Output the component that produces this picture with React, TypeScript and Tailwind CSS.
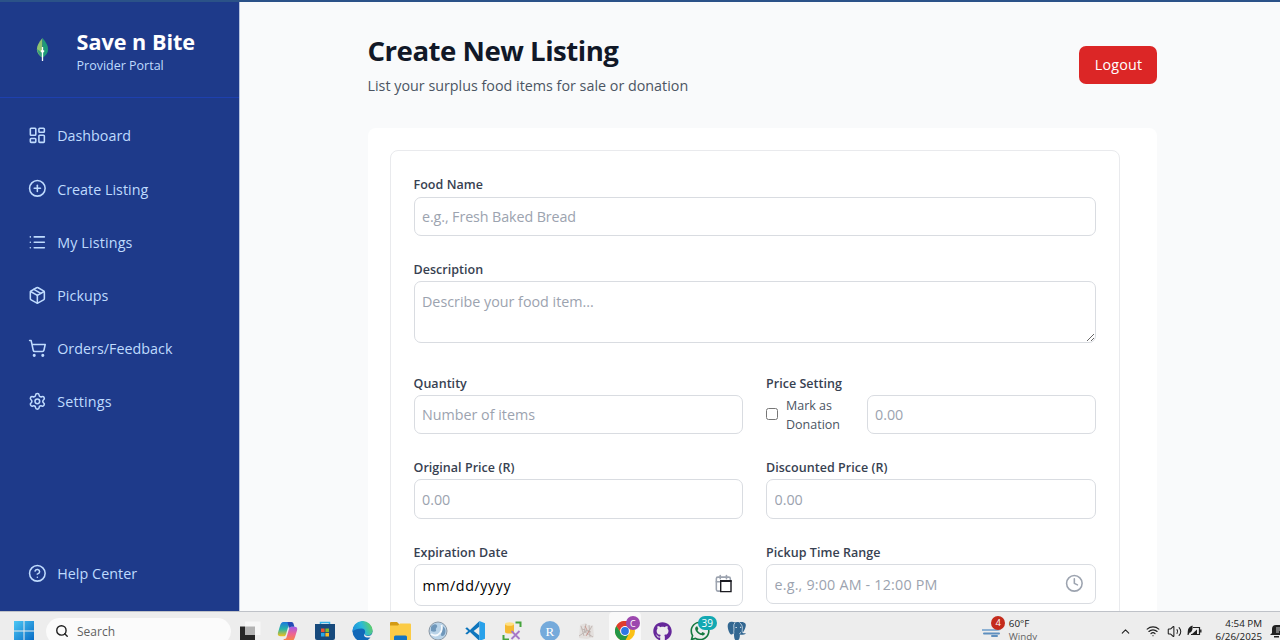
import type { ReactNode } from 'react';
import {
  LayoutDashboard,
  CirclePlus,
  List,
  Package,
  ShoppingCart,
  Settings,
  CircleQuestionMark,
  Calendar,
  Clock,
  Search,
  ChevronUp,
  Wifi,
  Volume2,
} from 'lucide-react';
import { FaGithub, FaWhatsapp } from 'react-icons/fa6';

const navItems = [
  { label: 'Dashboard', icon: LayoutDashboard, tracking: 'tracking-[0px]' },
  { label: 'Create Listing', icon: CirclePlus, tracking: 'tracking-[0.02px]' },
  { label: 'My Listings', icon: List, tracking: 'tracking-[0.15px]' },
  { label: 'Pickups', icon: Package, tracking: 'tracking-[0.05px]' },
  { label: 'Orders/Feedback', icon: ShoppingCart, tracking: 'tracking-[0.03px]' },
  { label: 'Settings', icon: Settings, tracking: 'tracking-[0.2px]' },
];

function Leaf() {
  return (
    <svg width="13" height="24" viewBox="0 0 12 24">
      <path d="M6 0C2 4.500 .4 8 .4 11.500c0 3.300 2 6 5.600 8.300z" fill="#8fc36f" />
      <path d="M6 0c4 4.500 5.600 8 5.600 11.500 0 3.300-2 6-5.600 8.300z" fill="#1f9a78" />
      <path d="M.5 11c.6 3.700 2.400 6.400 5.500 8.800V15z" fill="#37a07c" />
      <path d="M6 9v14M6 14.500L4.500 12.500M6 14.500L7.500 12.500" stroke="#fff" strokeWidth="1.300" fill="none" />
    </svg>
  );
}

function Sidebar() {
  return (
    <aside className="flex w-[240px] shrink-0 flex-col border-r border-[#b8c4de] bg-[#1e3a8a] text-[#bfdbfe]">
      <div className="flex h-[96px] items-center border-b border-[#1e40af] pl-9">
        <Leaf />
        <div className="ml-[27.500px] flex flex-col pt-[2px]">
          <span className="h-[25px] text-[21.600px] font-bold leading-[31px] text-white">Save n Bite</span>
          <span className="mt-[4px] h-[21px] text-[12.500px] leading-[21px]">Provider Portal</span>
        </div>
      </div>
      <nav className="mt-[11px] flex flex-col">
        {navItems.map(({ label, icon: Icon, tracking }) => (
          <a key={label} className="flex h-[53.200px] items-center gap-[11px] pl-[27.500px]">
            <Icon size={18.700} strokeWidth={2} />
            <span className={`pt-px text-[14.300px] ${tracking}`}>{label}</span>
          </a>
        ))}
      </nav>
      <a className="mt-auto mb-[11px] flex h-[53px] items-center gap-[11px] pl-[27.500px]">
        <CircleQuestionMark size={18.700} />
        <span className="text-[14.300px] tracking-[0.05px]">Help Center</span>
      </a>
    </aside>
  );
}

function Label({ children, gap = 'mb-[3px]' }: { children: ReactNode; gap?: string }) {
  return (
    <label
      className={`block h-[19px] text-[12.500px] font-semibold leading-[21px] tracking-[0.04px] text-[#374151] ${gap}`}
    >
      {children}
    </label>
  );
}

const field =
  'block w-full rounded-[7px] border border-[#d9dce1] bg-white px-[7.500px] text-[14.300px] text-black outline-none placeholder:text-[#9ca3af]';

function ListingForm() {
  return (
    <form className="h-[600px] w-[730px] rounded-[8px] border border-[#e9eaed] px-[23px] pt-[23px]">
      <Label gap="mb-[4px]">Food Name</Label>
      <input className={`${field} h-[39px] tracking-[-0.1px]`} placeholder="e.g., Fresh Baked Bread" />
      <Label gap="mt-[23px] mb-[3px]">Description</Label>
      <textarea className={`${field} h-[62px] resize-y pt-[8.500px]`} placeholder="Describe your food item..." />
      <div className="mt-[30px] grid grid-cols-2 gap-x-[23px] gap-y-[23px]">
        <div>
          <Label>Quantity</Label>
          <input className={`${field} h-[39px]`} placeholder="Number of items" />
        </div>
        <div>
          <Label>Price Setting</Label>
          <div className="flex h-[39px] items-center">
            <span className="mb-px size-[12px] shrink-0 rounded-[2.500px] border border-[#767676] bg-white" />
            <span className="ml-2 w-[80.500px] shrink-0 pt-[2px] text-[12.500px] leading-[18.700px] text-[#4b5563]">
              Mark as
              <br />
              Donation
            </span>
            <input className={`${field} h-[39px]`} placeholder="0.00" />
          </div>
        </div>
        <div>
          <Label>Original Price (R)</Label>
          <input className={`${field} h-[40px]`} placeholder="0.00" />
        </div>
        <div>
          <Label>Discounted Price (R)</Label>
          <input className={`${field} h-[40px]`} placeholder="0.00" />
        </div>
        <div>
          <Label>Expiration Date</Label>
          <div className={`${field} flex h-[42px] items-center justify-between`}>
            <span className="pl-[0.500px] pt-[2px] tracking-[0.55px]">mm/dd/yyyy</span>
            <span className="relative mr-[2px] mb-[3px] size-[19px] text-[#9ca3af]">
              <Calendar size={18.700} />
              <svg className="absolute left-[5px] top-[4.500px]" width="14" height="14" viewBox="0 0 14 14">
                <path d="M1.700 1.800h10.300v10.800H1.700z" fill="#fff" stroke="#1c1c22" strokeWidth="1.400" />
                <path d="M1 2.200h11.600" stroke="#1c1c22" strokeWidth="1.600" />
              </svg>
            </span>
          </div>
        </div>
        <div>
          <Label>Pickup Time Range</Label>
          <div className={`${field} flex h-[40px] items-center justify-between`}>
            <span className="pt-px tracking-[0.2px] text-[#9ca3af]">e.g., 9:00 AM - 12:00 PM</span>
            <Clock size={18.700} className="mr-[3px] mb-[2px] text-[#9ca3af]" />
          </div>
        </div>
      </div>
    </form>
  );
}

function WindowsLogo() {
  return (
    <svg width="20" height="20" viewBox="0 0 20 20">
      <defs>
        <linearGradient id="win" x1="0" y1="0" x2="1" y2="1">
          <stop offset="0" stopColor="#4cc8f5" />
          <stop offset="1" stopColor="#0669c4" />
        </linearGradient>
      </defs>
      <path d="M0 0h9.500v9.500H0zM10.500 0H20v9.500h-9.500zM0 10.500h9.500V20H0zM10.500 10.500H20V20h-9.500z" fill="url(#win)" />
    </svg>
  );
}

function TaskView() {
  return (
    <svg width="22" height="20" viewBox="0 0 22 20">
      <path d="M1 5.500h15V19H1z" fill="#262626" />
      <path d="M6 .5h15.500V14H6z" fill="#f7f7f7" />
      <path d="M6 5.500h10V14H6z" fill="#b3b3b3" />
    </svg>
  );
}

function Copilot() {
  return (
    <svg width="21" height="19" viewBox="0 0 22 20">
      <defs>
        <linearGradient id="cpa" x1="0" y1="0" x2="0" y2="1">
          <stop offset="0" stopColor="#1a78dd" />
          <stop offset=".5" stopColor="#28b5a8" />
          <stop offset="1" stopColor="#f2c21b" />
        </linearGradient>
        <linearGradient id="cpb" x1="0" y1="0" x2="0" y2="1">
          <stop offset="0" stopColor="#a35be8" />
          <stop offset=".5" stopColor="#ee6393" />
          <stop offset="1" stopColor="#f8883c" />
        </linearGradient>
      </defs>
      <path d="M15 0H7C4.500 0 3.800 2 3 4.500L1 11c-.8 2.700.4 4 2.500 4H7c1.400 0 2-1 2.500-2.500L12 4c.5-1.600 1.500-2 3-2z" fill="url(#cpa)" />
      <path d="M7 20h8c2.500 0 3.200-2 4-4.500L21 9c.8-2.700-.4-4-2.500-4H15c-1.400 0-2 1-2.500 2.500L10 16c-.5 1.600-1.500 2-3 2z" fill="url(#cpb)" />
      <path d="M11 0h4c1.500 0 2 .8 2.400 2l.9 3H15c-1.300 0-1.900.8-2.400 2z" fill="#254bb6" />
    </svg>
  );
}

function Store() {
  return (
    <svg width="20" height="20" viewBox="0 0 20 20">
      <path d="M5.500 4V1.500h9V4" fill="none" stroke="#35b4ea" strokeWidth="1.500" />
      <path d="M0 3h20v14a2 2 0 0 1-2 2H2a2 2 0 0 1-2-2z" fill="#174a7c" />
      <path d="M6 7.500h3.600v3.600H6z" fill="#ef5330" />
      <path d="M10.400 7.500H14v3.600h-3.600z" fill="#80bb2c" />
      <path d="M6 11.900h3.600v3.600H6z" fill="#28a8e8" />
      <path d="M10.400 11.900H14v3.600h-3.600z" fill="#fdbb22" />
    </svg>
  );
}

function Edge() {
  return (
    <svg width="21" height="21" viewBox="0 0 21 21">
      <defs>
        <linearGradient id="edge" x1="0" y1=".6" x2="1" y2=".3">
          <stop offset="0" stopColor="#1c8fdb" />
          <stop offset=".5" stopColor="#2bb8d9" />
          <stop offset="1" stopColor="#65d25a" />
        </linearGradient>
      </defs>
      <circle cx="10.500" cy="10.500" r="10" fill="#1268b8" />
      <path d="M.5 10.500a10 10 0 0 1 20-1c.3 3-1.800 5-4.500 5-2.300 0-3.700-.8-3.200-2 .8-1.800.4-5-3.300-5-3.500 0-7 1-9 3z" fill="url(#edge)" />
      <path d="M12.800 12.500c-.5 1.200.9 2.400 3.200 2.400 1.700 0 3.200-.8 4-2l1 3.600h-5c-3 0-5-1.500-3.200-4z" fill="#ededed" />
    </svg>
  );
}

function Explorer() {
  return (
    <svg width="21" height="20" viewBox="0 0 21 20">
      <path d="M0 2a1 1 0 0 1 1-1h6l2 2v3H0z" fill="#d39a14" />
      <path d="M0 4.500h8l2-2h10a1 1 0 0 1 1 1V19H0z" fill="#fbcb45" />
      <path d="M4 16a1.500 1.500 0 0 1 1.500-1.500h10A1.500 1.500 0 0 1 17 16v3H4z" fill="#1374c2" />
    </svg>
  );
}

function Globe() {
  return (
    <svg width="20" height="20" viewBox="0 0 20 20">
      <circle cx="10" cy="10" r="9" fill="#b9d3e8" stroke="#8b98a5" />
      <path d="M3 6c2-3 5-3.500 6-1.500s-2 2.500-1 4.500-3 2-5 1zM13 5c2.500 0 4.500 2 4.500 5s-1.500 5-3.500 5 0-3-1-5 2-3 0-5z" fill="#6f97ba" />
      <path d="M3 13c4 2.500 7 1.500 9-1s2.500-5 1.500-8" stroke="#f4f9fd" strokeWidth="1.800" fill="none" />
    </svg>
  );
}

function VsCode() {
  return (
    <svg width="20" height="20" viewBox="0 0 20 20">
      <path d="M14.500 0v20L5 10.900 2 13.500.3 12.500 3.200 10 .3 7.500 2 6.300l3 2.600z" fill="#0f76bd" />
      <path d="M14.500 5.500v9L8.600 10z" fill="#ededed" />
      <path d="M14.500 0L20 2.300v15.400L14.500 20z" fill="#28a1ea" />
    </svg>
  );
}

function DataTools() {
  return (
    <svg width="20" height="20" viewBox="0 0 20 20">
      <path d="M3 3v8c0 2 9 2 9 0V3z" fill="#f5b931" />
      <ellipse cx="7.500" cy="3" rx="4.500" ry="1.800" fill="#ffe082" />
      <path d="M13.500 1.500h5V6M1.500 14v4.500H7" fill="none" stroke="#45a43c" strokeWidth="2" />
      <path d="M9.500 10l8 8M17.500 10l-8 8" stroke="#a678c8" strokeWidth="1.800" />
    </svg>
  );
}

function RStudio() {
  return (
    <span className="flex size-[20px] items-center justify-center rounded-full bg-[#75aadb] font-['Liberation_Serif',serif] text-[13px] leading-none text-white">
      R
    </span>
  );
}

function Sketch() {
  return (
    <svg width="20" height="20" viewBox="0 0 20 20" fill="none">
      <path d="M3 4l6-2 2 3 5-1 1 12-7 2-8-1z" fill="#e3dfdd" />
      <path d="M4 5l3 10M9 3l-2 8 6-2M12 4l1 12M2 15l6-4 8 5M15 5l-5 9M5 8l9 3" stroke="#b9adaa" strokeWidth=".8" />
      <path d="M8 5l2 4M12 10l-3 5" stroke="#c98d84" strokeWidth=".8" />
    </svg>
  );
}

function Chrome() {
  return (
    <span className="relative flex h-[38px] w-[32px] items-center justify-center rounded-[4px] bg-[#f9f9f9]">
      <svg width="20" height="20" viewBox="0 0 20 20">
        <circle cx="10" cy="10" r="10" fill="#fbc116" />
        <path d="M10 5.500h9A10 10 0 0 0 1.300 5l4.800 7z" fill="#df3c2f" />
        <path d="M1.300 5A10 10 0 0 0 10 20l4-7.500-4 1.700-3.900-2z" fill="#239647" />
        <circle cx="10" cy="10" r="4.900" fill="#fff" />
        <circle cx="10" cy="10" r="3.900" fill="#2b76e5" />
      </svg>
      <span className="absolute left-[17px] top-[4px] flex size-[14px] items-center justify-center rounded-full bg-[#9c48ae] text-[9px] leading-none text-white">
        C
      </span>
    </span>
  );
}

function WhatsApp() {
  return (
    <span className="relative flex">
      <FaWhatsapp size={22} color="#14793f" />
      <span className="absolute left-[9px] top-[-4px] flex h-[14px] w-[19px] items-center justify-center rounded-full bg-[#13a8b2] text-[10px] leading-none text-white">
        39
      </span>
    </span>
  );
}

function Elephant() {
  return (
    <svg width="20" height="20" viewBox="0 0 20 20">
      <path
        d="M5 .8C2 .5.5 2.500.7 5.500c.2 3 1.500 7 3.300 8 .8.400 1.500-.3 2.200-1.200l.8.600c0 2.500.2 6.600 2.500 6.600 2.800 0 3.300-2.500 3.400-5.800 2.300.3 5.500-.4 6-1.500-1.700.2-2.800.1-3.200-.4 2-2.800 3.900-7 2.800-9-1.200-2.200-4.500-2.200-6.300-1.500C10.600.8 9 .9 7.900 1.500 7 1 6 .9 5 .8z"
        fill="#336791"
      />
      <path
        d="M7.800 2c-1.600 1.800-.8 4-.9 6.500-.1 1.600-.4 2.500.2 3.800M12.500 1.500c2 1.800 3 3.500 2.900 5.700 0 1.800-.6 3 .3 4.500M12.800 13.200c-.3-1 .4-1.500 1.300-1.900"
        fill="none"
        stroke="#dbe6ef"
        strokeWidth=".8"
      />
      <path d="M8.500 6.500h1.300M13 6.300h1.200" stroke="#fff" strokeWidth=".9" />
    </svg>
  );
}

const pinned = [
  TaskView,
  Copilot,
  Store,
  Edge,
  Explorer,
  Globe,
  VsCode,
  DataTools,
  RStudio,
  Sketch,
  Chrome,
  () => <FaGithub size={19} color="#66289a" />,
  WhatsApp,
  Elephant,
];

function Battery() {
  return (
    <svg width="15" height="12" viewBox="0 0 15 12">
      <path d="M6 2.500h6.500v7H4" fill="none" stroke="#222" strokeWidth="1.200" />
      <path d="M13.800 4.500v3" stroke="#222" strokeWidth="1.400" />
      <path d="M.8 6c0-3 2.200-4.500 4.700-5.500C6 4 5 7.500 2.500 7.800L1.500 10H.5z" fill="#222" />
      <path d="M4 10h6V4.500z" fill="#222" />
    </svg>
  );
}

function BellBadge() {
  return (
    <svg width="12" height="14" viewBox="0 0 12 14">
      <path d="M2 9V5a4 4 0 0 1 4-4h6v10H0zM4 12h5v1.500H4z" fill="#222" />
      <path d="M6 4h5M6 6h5M6 8h3" stroke="#fff" strokeWidth=".8" />
    </svg>
  );
}

function Taskbar() {
  return (
    <footer className="flex h-[29px] shrink-0 items-start overflow-hidden border-t border-[#bfc2c8] bg-[#ededed]">
      <div className="flex h-[38px] w-full shrink-0 items-center text-[#202020]">
        <div className="ml-[14px] flex w-[32px] shrink-0">
          <WindowsLogo />
        </div>
        <div className="flex h-[27px] w-[185px] shrink-0 items-center rounded-full bg-[#fbfbfb] pl-[9px]">
          <Search size={14} strokeWidth={2.400} />
          <span className="ml-2 pt-px text-[12px] text-[#5f5f5f]">Search</span>
        </div>
        <div className="ml-[0.700px] flex h-full shrink-0 items-center">
          {pinned.map((Icon, i) => (
            <span key={i} className="flex w-[37.450px] items-center justify-center">
              <Icon />
            </span>
          ))}
        </div>
        <div className="relative ml-[226.500px] flex w-[26.500px] shrink-0">
          <svg width="20" height="14" viewBox="0 0 20 14" fill="none" strokeLinecap="round">
            <path d="M0 6h15c4 0 4-4 1-4" stroke="#8db1d3" strokeWidth="2" />
            <path d="M2 9.500h15M10 12h5" stroke="#5e8fbf" strokeWidth="2" />
          </svg>
          <span className="absolute left-[9px] top-[-8px] flex size-[14px] items-center justify-center rounded-full bg-[#c42b1c] text-[9.500px] leading-none text-white">
            4
          </span>
        </div>
        <div className="flex h-[28px] shrink-0 flex-col text-[9.800px] leading-[13px]">
          <span>60°F</span>
          <span className="text-[#636363]">Windy</span>
        </div>
        <div className="ml-auto flex shrink-0 items-center">
          <ChevronUp size={13} />
          <Wifi size={14} className="ml-[14px]" />
          <Volume2 size={15} strokeWidth={1.700} className="ml-[7px]" />
          <span className="ml-[5px]">
            <Battery />
          </span>
          <div className="flex h-[28px] w-[60.500px] flex-col items-end text-[9.800px] leading-[13px]">
            <span>4:54 PM</span>
            <span>6/26/2025</span>
          </div>
          <span className="ml-[8px] mr-[-2px]">
            <BellBadge />
          </span>
        </div>
      </div>
    </footer>
  );
}

export default function App() {
  return (
    <div className="flex h-[640px] w-[1280px] flex-col overflow-hidden bg-[#f9fafb] font-['Open_Sans',sans-serif]">
      <div className="h-[2px] shrink-0 bg-[#2b5288]" />
      <div className="flex min-h-0 flex-1 overflow-hidden">
        <Sidebar />
        <main className="flex-1 overflow-hidden pl-[127.500px]">
          <div className="flex h-[126px] w-[789.500px] items-start justify-between">
            <div className="pt-[31px]">
              <h1 className="h-[34px] text-[27.600px] font-bold leading-[34px] tracking-[-0.5px] text-[#111827]">
                Create New Listing
              </h1>
              <p className="mt-[7px] text-[14.300px] leading-[24px] tracking-[0.01px] text-[#4b5563]">
                List your surplus food items for sale or donation
              </p>
            </div>
            <button className="mt-[43.500px] h-[38px] w-[78px] rounded-[7px] bg-[#dc2626] pl-px pt-px text-[14.300px] tracking-[0.2px] text-white">
              Logout
            </button>
          </div>
          <section className="w-[789.500px] rounded-[8px] bg-white pl-[22px] pt-[22px]">
            <ListingForm />
          </section>
        </main>
      </div>
      <Taskbar />
    </div>
  );
}
